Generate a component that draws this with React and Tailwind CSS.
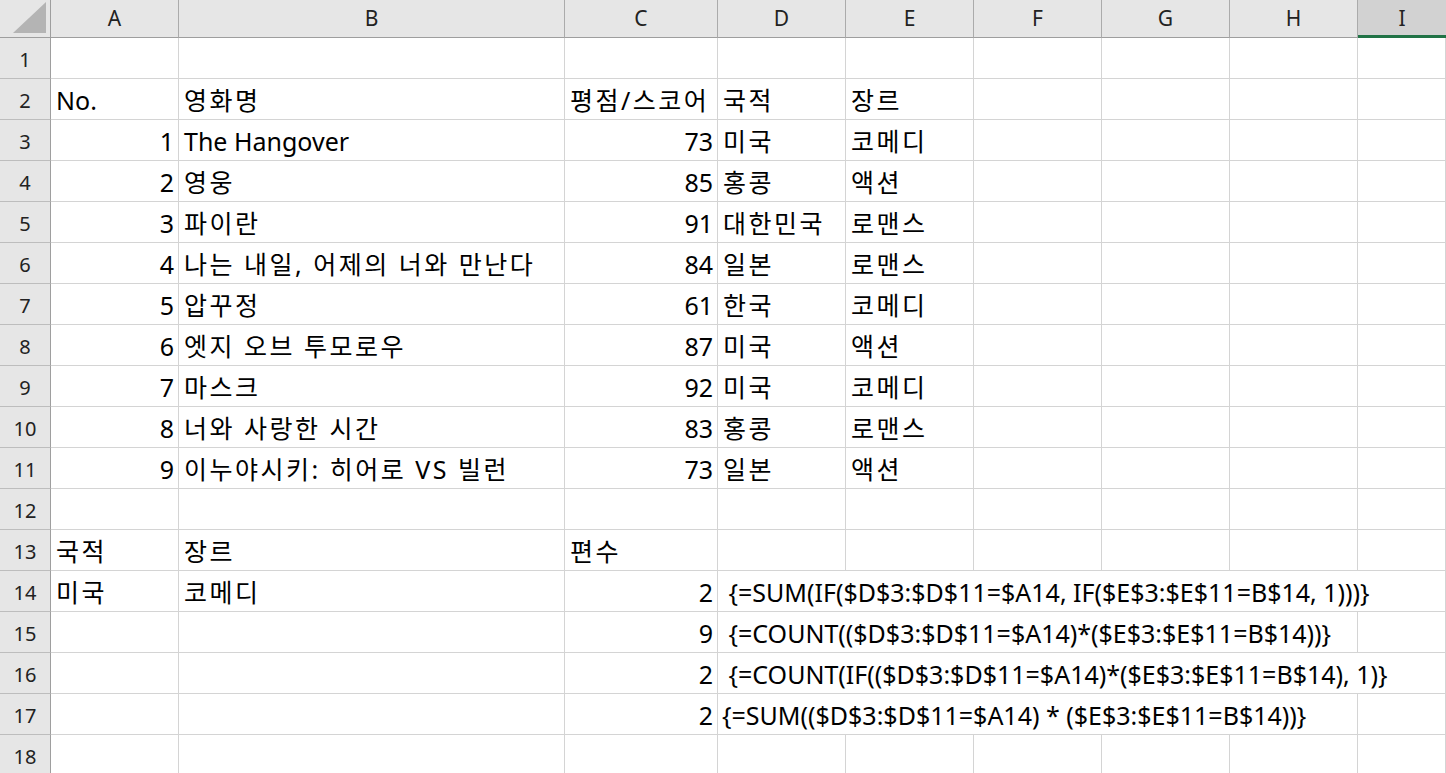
import React from "react";

const COLS = ["A", "B", "C", "D", "E", "F", "G", "H", "I"];

const movies = [
  [1, "The Hangover", 73, "미국", "코메디"],
  [2, "영웅", 85, "홍콩", "액션"],
  [3, "파이란", 91, "대한민국", "로맨스"],
  [4, "나는 내일, 어제의 너와 만난다", 84, "일본", "로맨스"],
  [5, "압꾸정", 61, "한국", "코메디"],
  [6, "엣지 오브 투모로우", 87, "미국", "액션"],
  [7, "마스크", 92, "미국", "코메디"],
  [8, "너와 사랑한 시간", 83, "홍콩", "로맨스"],
  [9, "이누야시키: 히어로 VS 빌런", 73, "일본", "액션"],
];

const formulas = [
  { n: 2, text: " {=SUM(IF($D$3:$D$11=$A14, IF($E$3:$E$11=B$14, 1)))}", wide: true },
  { n: 9, text: " {=COUNT(($D$3:$D$11=$A14)*($E$3:$E$11=B$14))}", wide: false },
  { n: 2, text: " {=COUNT(IF(($D$3:$D$11=$A14)*($E$3:$E$11=B$14), 1)}", wide: true },
  { n: 2, text: "{=SUM(($D$3:$D$11=$A14) * ($E$3:$E$11=B$14))}", wide: false },
];

// hangul in the sheet font runs wider than Noto's, so space it out a bit
const hasHangul = (v) => typeof v === "string" && /[\uac00-\ud7a3]/.test(v);

const Cell = ({ children, right, className = "" }) => (
  <div
    className={`h-[41px] border-r border-b border-[#d4d4d4] flex items-center pt-[3px] whitespace-pre overflow-visible px-[5px] ${
      right ? "justify-end pr-[4px]" : "justify-start"
    } ${hasHangul(children) ? "tracking-[2.5px]" : ""} ${className}`}
  >
    {children}
  </div>
);

const RowHead = ({ n }) => (
  <div className="h-[41px] bg-[#e6e6e6] border-r border-r-[#9e9e9e] border-b border-b-[#bdbdbd] flex items-center justify-center pt-[3px] text-[20px] text-[#222]">
    {n}
  </div>
);

const EmptyRow = ({ n }) => (
  <>
    <RowHead n={n} />
    {COLS.map((c) => (
      <Cell key={c} />
    ))}
  </>
);

export default function App() {
  return (
    <div className="w-[1446px] h-[773px] overflow-hidden bg-white font-['Noto_Sans','Noto_Sans_CJK_KR',sans-serif] text-[25px] text-black">
      <div className="grid grid-cols-[51px_128px_386px_153px_128px_128px_128px_128px_128px_1fr]">
        {/* header */}
        <div className="h-[38px] bg-[#e6e6e6] border-r border-r-[#9e9e9e] border-b border-b-[#9e9e9e] flex items-end justify-end pr-[4px] pb-[4px]">
          <svg width="33" height="31" viewBox="0 0 33 31">
            <polygon points="33,0 33,31 0,31" fill="#b4b4b4" />
          </svg>
        </div>
        {COLS.map((c) =>
          c === "I" ? (
            <div
              key={c}
              className="h-[38px] bg-[#d2d2d2] border-b-[3px] border-b-[#217346] flex items-center justify-center pt-[2px] text-[21px] text-[#222]"
            >
              {c}
            </div>
          ) : (
            <div
              key={c}
              className="h-[38px] bg-[#e6e6e6] border-r border-r-[#ababab] border-b border-b-[#9e9e9e] flex items-center justify-center pt-[1px] text-[21px] text-[#222]"
            >
              {c}
            </div>
          )
        )}

        <EmptyRow n={1} />

        <RowHead n={2} />
        <Cell>No.</Cell>
        <Cell>영화명</Cell>
        <Cell>평점/스코어</Cell>
        <Cell>국적</Cell>
        <Cell>장르</Cell>
        <Cell />
        <Cell />
        <Cell />
        <Cell />

        {movies.map((m, i) => (
          <React.Fragment key={m[0]}>
            <RowHead n={i + 3} />
            <Cell right>{m[0]}</Cell>
            <Cell>{m[1]}</Cell>
            <Cell right>{m[2]}</Cell>
            <Cell>{m[3]}</Cell>
            <Cell>{m[4]}</Cell>
            <Cell />
            <Cell />
            <Cell />
            <Cell />
          </React.Fragment>
        ))}

        <EmptyRow n={12} />

        <RowHead n={13} />
        <Cell>국적</Cell>
        <Cell>장르</Cell>
        <Cell>편수</Cell>
        <Cell />
        <Cell />
        <Cell />
        <Cell />
        <Cell />
        <Cell />

        {formulas.map((f, i) => (
          <React.Fragment key={i}>
            <RowHead n={i + 14} />
            <Cell>{i === 0 ? "미국" : ""}</Cell>
            <Cell>{i === 0 ? "코메디" : ""}</Cell>
            <Cell right>{f.n}</Cell>
            {f.wide ? (
              <Cell className="col-span-6 !pl-[4px]">{f.text}</Cell>
            ) : (
              <>
                <Cell className="col-span-5 !pl-[4px]">{f.text}</Cell>
                <Cell />
              </>
            )}
          </React.Fragment>
        ))}

        <EmptyRow n={18} />
      </div>
    </div>
  );
}
